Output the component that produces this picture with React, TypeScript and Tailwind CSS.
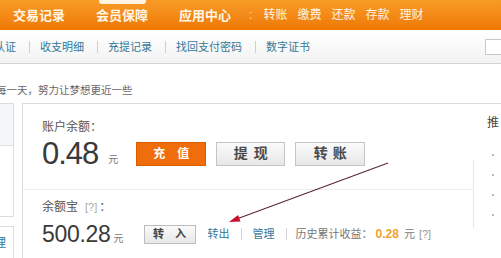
import React from "react";

function Sep() {
  return <span className="ml-[13px] mr-[10px] w-px h-[12px] bg-[#d0d0d0] shrink-0" />;
}

function LinkSep() {
  return <span className="block w-px h-[12px] bg-[#d5d5d5] shrink-0" />;
}

export default function App() {
  return (
    <div className="relative w-[501px] h-[258px] overflow-hidden bg-white font-['Liberation_Sans','Noto_Sans_CJK_SC',sans-serif]">
      {/* top orange nav */}
      <div className="relative h-[30px] bg-linear-to-b from-[#f89b26] to-[#ef7800] flex items-center text-white whitespace-nowrap">
        <div className="flex items-center gap-[31px] pl-[13px] text-[13px] font-bold leading-none text-[#fff6e6]">
          <span>交易记录</span>
          <span className="relative">
            会员保障
            <span className="absolute left-[3px] top-[-9px] w-[47px] h-[4px] rounded-b-[3px] bg-[#fff4e2]" />
          </span>
          <span>应用中心</span>
        </div>
        <span className="ml-[18px] text-[12px] leading-none text-[#ffe0b5]">:</span>
        <div className="ml-[11px] flex items-center gap-[10px] text-[12px] leading-none text-[#fff3e0]">
          <span>转账</span>
          <span>缴费</span>
          <span>还款</span>
          <span>存款</span>
          <span>理财</span>
        </div>
      </div>

      {/* sub nav */}
      <div className="h-[34px] bg-linear-to-b from-white to-[#f3f3f3] border-b border-[#d3d3d3] flex items-center text-[11px] leading-[14px] text-[#33789a] whitespace-nowrap">
        <span className="-ml-[28px]">实名认证</span>
        <Sep />
        <span>收支明细</span>
        <Sep />
        <span>充提记录</span>
        <Sep />
        <span>找回支付密码</span>
        <Sep />
        <span>数字证书</span>
        <span className="ml-auto w-[16px] h-[16px] border-l border-t border-b border-[#c8c8c8] bg-white shrink-0" />
      </div>

      {/* slogan */}
      <div className="h-[39px] pt-[19px] text-[10.5px] leading-[14px] text-[#666] whitespace-nowrap">
        <span className="-ml-[25px] inline-block">珍惜每一天，努力让梦想更近一些</span>
      </div>

      {/* main */}
      <div className="flex h-[155px]">
        {/* left sidebar */}
        <div className="w-[14px] shrink-0 flex flex-col">
          <div className="h-[114px] border-t border-r border-b border-[#dcdcdc] flex flex-col">
            <div className="h-[42px] bg-[#f4f7f9] border-b border-[#e2e2e2]" />
          </div>
          <div className="mt-[9px] flex-1 border-t border-r border-[#dcdcdc] overflow-hidden pt-[8px] text-[12px] leading-[16px] text-[#33789a] whitespace-nowrap">
            <span className="-ml-[18px] inline-block">管理</span>
          </div>
        </div>

        {/* card */}
        <div className="ml-[8px] flex-1 border-t border-l border-[#dcdcdc] flex">
          <div className="w-[450px] shrink-0">
            {/* balance */}
            <div className="h-[86px] border-b border-[#ececec] pl-[19px] pt-[15px]">
              <div className="text-[12px] leading-[16px] text-[#555]">账户余额：</div>
              <div className="mt-[3px] h-[31px] flex items-center whitespace-nowrap">
                <span className="text-[31px] leading-[31px] tracking-[-1px] text-[#3a3a3a] font-['Liberation_Sans',sans-serif]">0.48</span>
                <span className="ml-[10px] self-end mb-[3px] text-[10px] leading-[12px] text-[#777]">元</span>
                <div className="ml-[18px] w-[70px] h-[24px] bg-[#f06d0c] border border-[#d95c00] flex items-center justify-center gap-[12px] text-[12px] font-bold text-white">
                  <span>充</span>
                  <span>值</span>
                </div>
                <div className="ml-[10px] w-[69px] h-[24px] bg-linear-to-b from-[#fbfbfb] to-[#e7e7e7] border border-[#c4c4c4] flex items-center justify-center gap-[6px] text-[14px] font-bold text-[#4a4a4a]">
                  <span>提</span>
                  <span>现</span>
                </div>
                <div className="ml-[10px] w-[70px] h-[24px] bg-linear-to-b from-[#fbfbfb] to-[#e7e7e7] border border-[#c4c4c4] flex items-center justify-center gap-[5px] text-[14px] font-bold text-[#4a4a4a]">
                  <span>转</span>
                  <span>账</span>
                </div>
              </div>
            </div>

            {/* yuebao */}
            <div className="pl-[19px] pt-[9px]">
              <div className="flex items-center text-[12px] leading-[16px] text-[#555] whitespace-nowrap">
                <span>余额宝</span>
                <span className="ml-[7px] text-[11px] text-[#aaa]">[?]</span>
                <span className="ml-[2px]">：</span>
              </div>
              <div className="mt-[7px] h-[24px] flex items-center whitespace-nowrap">
                <span className="text-[23px] leading-[24px] tracking-[-0.3px] text-[#3a3a3a] font-['Liberation_Sans',sans-serif]">500.28</span>
                <span className="ml-[3px] self-end mb-[1px] text-[10px] leading-[12px] text-[#777]">元</span>
                <div className="ml-[20px] w-[52px] h-[19px] bg-linear-to-b from-[#fafafa] to-[#e8e8e8] border border-[#bdbdbd] flex items-center justify-center gap-[11px] text-[11px] font-bold text-[#444]">
                  <span>转</span>
                  <span>入</span>
                </div>
                <span className="ml-[12px] text-[11px] text-[#33789a]">转出</span>
                <span className="ml-[11px]"><LinkSep /></span>
                <span className="ml-[11px] text-[11px] text-[#33789a]">管理</span>
                <span className="ml-[11px]"><LinkSep /></span>
                <span className="ml-[9px] text-[11px] text-[#777]">历史累计收益：</span>
                <span className="ml-[3px] text-[12px] font-bold text-[#f0a132] font-['Liberation_Sans',sans-serif]">0.28</span>
                <span className="ml-[5px] text-[11px] text-[#777]">元</span>
                <span className="ml-[4px] text-[11px] text-[#999]">[?]</span>
              </div>
            </div>
          </div>

          {/* right column */}
          <div className="flex-1 flex flex-col">
            <div className="pl-[14px] pt-[11px] text-[12px] leading-[16px] text-[#444] whitespace-nowrap">推</div>
            <div className="mt-[23px] flex items-start">
              <div className="mt-[6px] w-px h-[68px] bg-[#e6e6e6]" />
              <div className="ml-[18px] flex flex-col gap-[18px]">
                <span className="w-[2px] h-[2px] bg-[#bbb]" />
                <span className="w-[2px] h-[2px] bg-[#bbb]" />
                <span className="w-[2px] h-[2px] bg-[#bbb]" />
                <span className="w-[2px] h-[2px] bg-[#bbb]" />
              </div>
            </div>
          </div>
        </div>
      </div>

      {/* annotation arrow */}
      <svg className="absolute left-0 top-0 pointer-events-none" width="501" height="258" viewBox="0 0 501 258">
        <line x1="388" y1="163" x2="238" y2="218.6" stroke="#5a2535" strokeWidth="1.1" />
        <polygon points="229,222 240.5,221.5 238.1,214.9" fill="#c8102e" />
      </svg>
    </div>
  );
}
